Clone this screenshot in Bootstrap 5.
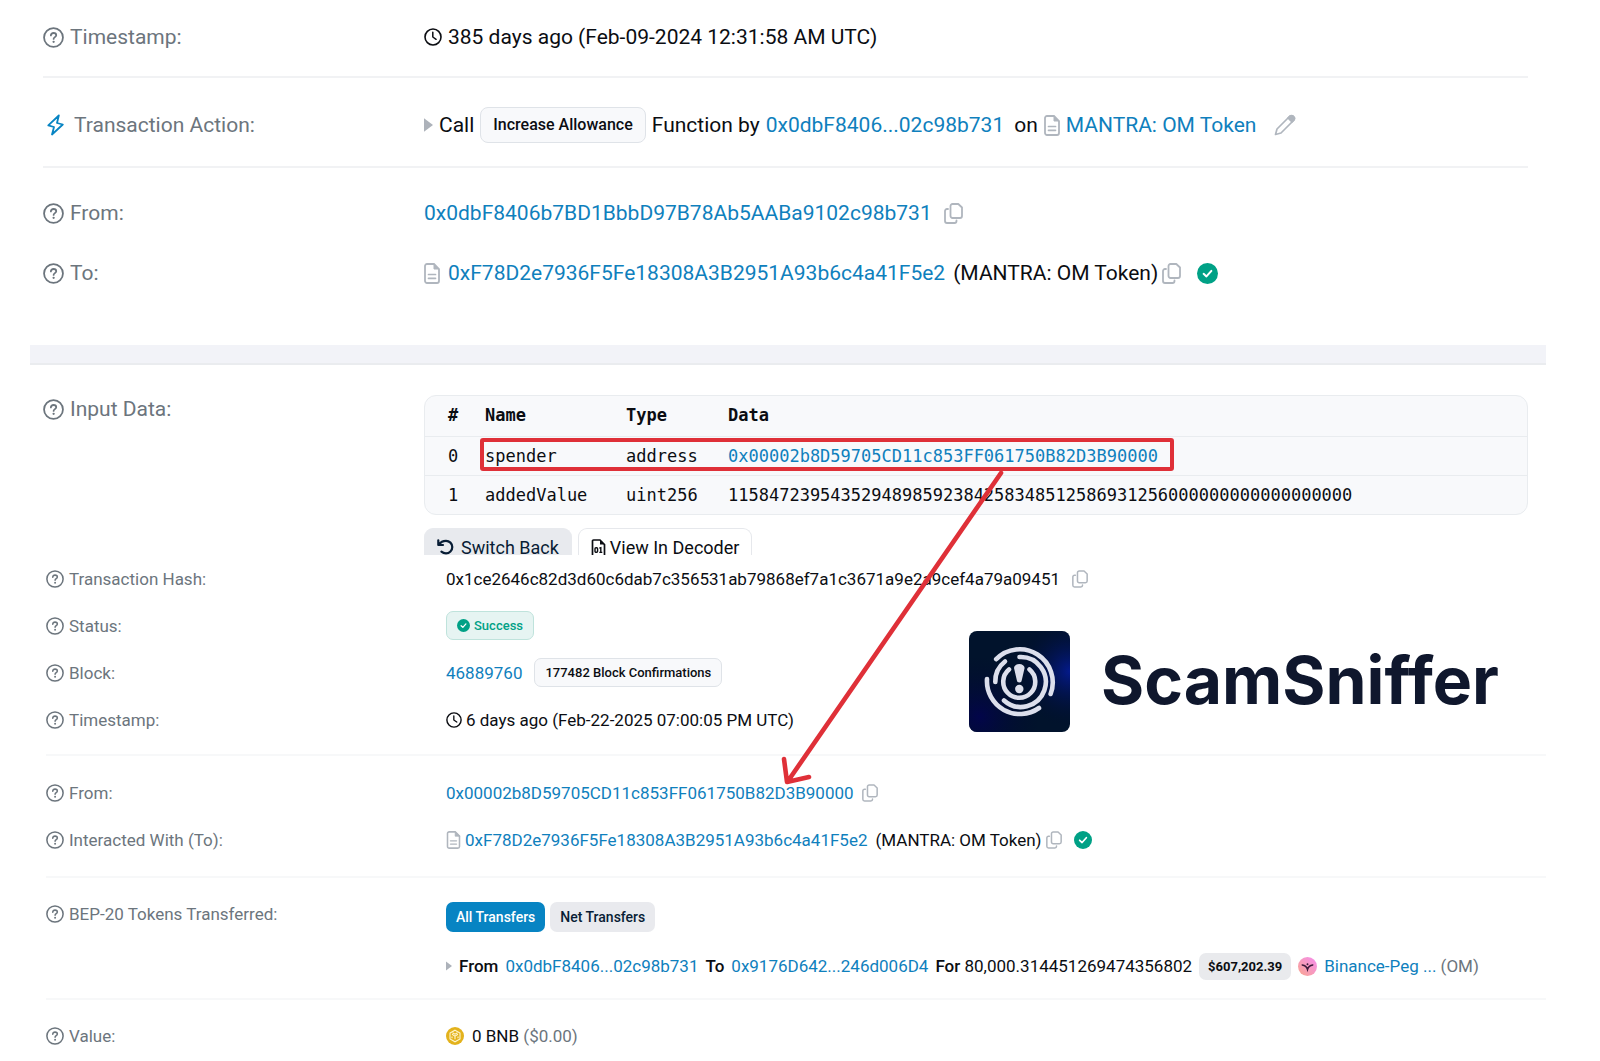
<!DOCTYPE html>
<html lang="en">
<head>
<meta charset="utf-8">
<meta name="viewport" content="width=device-width, initial-scale=1">
<title>Transaction Details</title>
<link href="https://cdn.jsdelivr.net/npm/bootstrap@5.3.0/dist/css/bootstrap.min.css" rel="stylesheet">
<style>
  body { font-family: Roboto, "Liberation Sans", sans-serif; color: #0b0d12; background: #fff; }
  a { color: #0f80bd; text-decoration: none; }
  svg { flex: none; display: block; }
  .ico { color: #b0b6be; background: none; border: 0; padding: 0; }
  .tx-page { position: relative; overflow: hidden; }
  .tx-label { flex: none; color: #6c757d; }
  .upper { font-size: 21px; line-height: 28px; margin: 0 72px 0 43px; }
  .upper .tx-label { width: 381px; gap: 6px; }
  .upper .tx-group { border-bottom: 2px solid #f1f2f4; }
  .lower { font-size: 17px; line-height: 24px; margin: 0 54px 0 46px; }
  .lower .tx-label { width: 400px; gap: 5px; }
  .lower .tx-group { border-bottom: 2px solid #f7f8f9; }
  .g-time { padding: 23px 0 25px; }
  .g-action { padding: 29px 0 23px; }
  .g-party { padding: 15px 0 42px; }
  .g-party .tx-row { min-height: 60px; }
  .lower .tx-row { min-height: 47px; }
  .g-status { padding-bottom: 11px; }
  .g-from { padding: 13px 0; }
  .g-tokens { padding: 24px 0 18px; }
  .g-value { padding-top: 12px; }
  .tx-band { height: 20px; margin: 0 54px 0 30px; background: #f2f3f8; border-bottom: 2px solid #eaecef; }
  .g-input { padding-top: 30px; }
  .gap-6 { gap: 6px; }
  .gap-7 { gap: 7px; }
  .pill { font-weight: 500; border: 1px solid #dfe3e8; border-radius: 8px; background: #f8f9fb; color: #0b0d12; }
  .pill-lg { font-size: 16px; line-height: 34px; padding: 0 12px; }
  .pill-sm { font-size: 13px; line-height: 27px; padding: 0 10px; border-radius: 7px; }
  .pill-ok { color: #00a186; background: #e6f4f2; border-color: #bfe3dc; gap: 4px; }
  .pill-usd { font-size: 13px; line-height: 27px; padding: 0 9px; font-weight: 700; background: #e9eaed; border-radius: 7px; }
  .data-box { border: 1px solid #e9ecef; border-radius: 12px; background: #f8f9fb; overflow: hidden; }
  .data-table { width: 100%; font-family: "DejaVu Sans Mono", "Liberation Mono", monospace; font-size: 17px; line-height: 24px; }
  .data-table th, .data-table td { padding: 7px 0; text-align: left; }
  .data-table th { padding-bottom: 9px; }
  .data-table th:first-child, .data-table td:first-child { padding-left: 23px; width: 60px; }
  .data-table tbody tr { border-top: 1px solid #e9ecef; }
  .c-name { width: 141px; } .c-type { width: 102px; }
  .btn-strip { margin-top: 13px; gap: 6px; }
  .btn-strip button { font-size: 18px; line-height: 28px; padding: 5px 12px 0; border: 1px solid #e6e8ec; border-bottom: 0; border-radius: 9px 9px 0 0; background: #fff; color: #0b0d12; height: 27px; }
  .btn-strip svg { margin-top: 5px; }
  .btn-strip .on { background: #e8eaee; border-color: #e8eaee; color: #081d35; }
  .tabs button { font-size: 14px; font-weight: 500; line-height: 30px; padding: 0 10px; border: 0; border-radius: 7px; background: #e9eaee; color: #081d35; }
  .tabs .on { background: #0784c3; color: #fff; }
  .tabs { gap: 5px; }
  .tx-line { margin-top: 20px; height: 28px; }
  .semi { font-weight: 500; }
  .brand-mark { position: absolute; left: 969px; top: 631px; gap: 31px; }
  .brand-name { font-family: Inter, Roboto, sans-serif; font-weight: 700; font-size: 66px; line-height: 98px; color: #0f172d; }
  .note { position: absolute; left: 0; top: 0; pointer-events: none; }
</style>
<script src="https://cdn.jsdelivr.net/npm/bootstrap@5.3.0/dist/js/bootstrap.bundle.min.js"></script>
</head>
<body>
<svg width="0" height="0" class="position-absolute" aria-hidden="true">
  <defs>
    <symbol id="help" viewBox="0 0 20 20"><circle cx="10" cy="10" r="9" fill="none" stroke="currentColor" stroke-width="1.7"/><path d="M7.5 8c0-1.500 1-2.300 2.500-2.300s2.600.8 2.600 2.200c0 1.700-2.500 1.800-2.500 3.500" fill="none" stroke="currentColor" stroke-width="1.700" stroke-linecap="round"/><circle cx="10.100" cy="14.100" r="1.100" fill="currentColor"/></symbol>
    <symbol id="clock" viewBox="0 0 18 18"><circle cx="9" cy="9" r="8" fill="none" stroke="currentColor" stroke-width="1.600"/><path d="M8.800 4.300V9l3.300 2.300" fill="none" stroke="currentColor" stroke-width="1.500" stroke-linecap="round" stroke-linejoin="round"/></symbol>
    <symbol id="doc" viewBox="0 0 16 21"><path d="M3 1h7l5 5v12a2 2 0 0 1-2 2H3a2 2 0 0 1-2-2V3a2 2 0 0 1 2-2z" fill="none" stroke="currentColor" stroke-width="1.800"/><path d="M10 1v5h5z" fill="currentColor" stroke="currentColor"/><path d="M4.500 11.500h7M4.500 15.300h7" stroke="currentColor" stroke-width="1.700" stroke-linecap="round"/></symbol>
    <symbol id="copy" viewBox="0 0 19 21"><path d="M8.500 1h5.800L18 4.500V13a2 2 0 0 1-2 2H8.500a2 2 0 0 1-2-2V3a2 2 0 0 1 2-2z" fill="none" stroke="currentColor" stroke-width="1.800" stroke-linejoin="round"/><path d="M4 6H3a2 2 0 0 0-2 2v10a2 2 0 0 0 2 2h7.500a2 2 0 0 0 2-2v-.5" fill="none" stroke="currentColor" stroke-width="1.800" stroke-linecap="round"/></symbol>
    <symbol id="ok" viewBox="0 0 20 20"><circle cx="10" cy="10" r="10" fill="#00a186"/><path d="M6.300 10.300l2.700 2.500 4.700-5.300" fill="none" stroke="#fff" stroke-width="1.900" stroke-linecap="round" stroke-linejoin="round"/></symbol>
    <symbol id="caret" viewBox="0 0 8 12"><path d="M0 0L8 6L0 12z" fill="#adb2ba"/></symbol>
  </defs>
</svg>

<main class="tx-page">
  <section class="upper">
    <div class="tx-group g-time d-flex">
      <div class="tx-label d-flex align-items-center"><svg width="21" height="21"><use href="#help"/></svg><span>Timestamp:</span></div>
      <div class="d-flex align-items-center gap-6"><svg width="18" height="18"><use href="#clock"/></svg><span>385 days ago (Feb-09-2024 12:31:58 AM UTC)</span></div>
    </div>
    <div class="tx-group g-action d-flex align-items-center">
      <div class="tx-label d-flex align-items-center">
        <svg class="ms-1 me-1" width="17" height="22" viewBox="0 0 17 22" fill="none" stroke="#0784c3" stroke-width="1.800" stroke-linejoin="round"><path d="M11.800 1.500L1.300 11.300 7 13 5 20.500 15.800 10.500 10 9z"/></svg><span>Transaction Action:</span>
      </div>
      <div class="d-flex align-items-center gap-6">
        <svg width="9" height="14"><use href="#caret"/></svg><span>Call</span>
        <span class="pill pill-lg">Increase Allowance</span>
        <span>Function by</span> <a href="#">0x0dbF8406...02c98b731</a> <span class="ms-1">on</span>
        <svg class="ico" width="16" height="21"><use href="#doc"/></svg><a href="#">MANTRA: OM Token</a>
        <button type="button" class="ico ms-2" aria-label="Edit name tag"><svg class="ms-1" width="22" height="22" viewBox="0 0 22 22" fill="none" stroke="currentColor" stroke-width="1.700" stroke-linejoin="round"><path d="M1.500 20.500L3 15 15.500 2.500a2.500 2.500 0 0 1 4 4L7 19z"/><path d="M14 4l2-2h3l1.500 2-.5 2-2 2z" fill="currentColor"/></svg></button>
      </div>
    </div>
    <div class="g-party">
      <div class="tx-row d-flex align-items-center">
        <div class="tx-label d-flex align-items-center"><svg width="21" height="21"><use href="#help"/></svg><span>From:</span></div>
        <a href="#">0x0dbF8406b7BD1BbbD97B78Ab5AABa9102c98b731</a>
        <button type="button" class="ico ms-2 ps-1" aria-label="Copy address"><svg width="19" height="21"><use href="#copy"/></svg></button>
      </div>
      <div class="tx-row d-flex align-items-center">
        <div class="tx-label d-flex align-items-center"><svg width="21" height="21"><use href="#help"/></svg><span>To:</span></div>
        <svg class="ico" width="16" height="21"><use href="#doc"/></svg>
        <a class="ms-2 me-2" href="#">0xF78D2e7936F5Fe18308A3B2951A93b6c4a41F5e2</a><span>(MANTRA: OM Token)</span>
        <button type="button" class="ico ms-1 me-3" aria-label="Copy address"><svg width="19" height="21"><use href="#copy"/></svg></button>
        <svg width="21" height="21"><use href="#ok"/></svg>
      </div>
    </div>
  </section>

  <div class="tx-band"></div>

  <section class="upper">
    <div class="g-input d-flex align-items-start">
      <div class="tx-label d-flex align-items-center"><svg width="21" height="21"><use href="#help"/></svg><span>Input Data:</span></div>
      <div class="flex-grow-1">
        <div class="data-box">
          <table class="data-table">
            <thead><tr><th>#</th><th class="c-name">Name</th><th class="c-type">Type</th><th>Data</th></tr></thead>
            <tbody>
              <tr><td>0</td><td>spender</td><td>address</td><td><a href="#">0x00002b8D59705CD11c853FF061750B82D3B90000</a></td></tr>
              <tr><td>1</td><td>addedValue</td><td>uint256</td><td>1158472395435294898592384258348512586931256000000000000000000</td></tr>
            </tbody>
          </table>
        </div>
        <div class="btn-strip d-flex align-items-start">
          <button type="button" class="on d-flex align-items-start gap-7"><svg width="17" height="16" viewBox="0 0 17 16" fill="none" stroke="currentColor" stroke-width="2.200" stroke-linecap="round" stroke-linejoin="round"><path d="M1.300 1.300v4.700h4.700M1.800 5.700C3.600 3 6.200 1.800 9 1.800a6.300 6.300 0 0 1 0 12.600c-1.800 0-3.300-.6-4.600-1.700"/></svg><span>Switch Back</span></button>
          <button type="button" class="d-flex align-items-start"><svg class="me-1" width="15" height="16" viewBox="0 0 15 16"><path d="M2.500 1H9l4.500 4.500V18h-12V2a1 1 0 0 1 1-1z" fill="none" stroke="currentColor" stroke-width="1.700"/><path d="M9 1v4.500h4.500z" fill="currentColor"/><rect x="4" y="8.700" width="2.600" height="4.600" rx="1" fill="none" stroke="currentColor" stroke-width="1.400"/><path d="M8.300 9.200l1.500-.5v4.800M8.300 13.400h3" fill="none" stroke="currentColor" stroke-width="1.400"/></svg><span>View In Decoder</span></button>
        </div>
      </div>
    </div>
  </section>

  <section class="lower">
    <div class="tx-group g-status">
      <div class="tx-row d-flex align-items-center">
        <div class="tx-label d-flex align-items-center"><svg width="18" height="18"><use href="#help"/></svg><span>Transaction Hash:</span></div>
        <span>0x1ce2646c82d3d60c6dab7c356531ab79868ef7a1c3671a9e2a9cef4a79a09451</span>
        <button type="button" class="ico ms-2 ps-1" aria-label="Copy hash"><svg width="16" height="18"><use href="#copy"/></svg></button>
      </div>
      <div class="tx-row d-flex align-items-center">
        <div class="tx-label d-flex align-items-center"><svg width="18" height="18"><use href="#help"/></svg><span>Status:</span></div>
        <span class="pill pill-sm pill-ok d-flex align-items-center"><svg width="13" height="13"><use href="#ok"/></svg>Success</span>
      </div>
      <div class="tx-row d-flex align-items-center">
        <div class="tx-label d-flex align-items-center"><svg width="18" height="18"><use href="#help"/></svg><span>Block:</span></div>
        <div class="d-flex align-items-center gap-2"><a class="pe-1" href="#">46889760</a><span class="pill pill-sm">177482 Block Confirmations</span></div>
      </div>
      <div class="tx-row d-flex align-items-center">
        <div class="tx-label d-flex align-items-center"><svg width="18" height="18"><use href="#help"/></svg><span>Timestamp:</span></div>
        <svg class="me-1" width="16" height="16"><use href="#clock"/></svg><span>6 days ago (Feb-22-2025 07:00:05 PM UTC)</span>
      </div>
    </div>
    <div class="tx-group g-from">
      <div class="tx-row d-flex align-items-center">
        <div class="tx-label d-flex align-items-center"><svg width="18" height="18"><use href="#help"/></svg><span>From:</span></div>
        <a href="#">0x00002b8D59705CD11c853FF061750B82D3B90000</a>
        <button type="button" class="ico ms-2" aria-label="Copy address"><svg width="16" height="18"><use href="#copy"/></svg></button>
      </div>
      <div class="tx-row d-flex align-items-center">
        <div class="tx-label d-flex align-items-center"><svg width="18" height="18"><use href="#help"/></svg><span>Interacted With (To):</span></div>
        <svg class="ico me-1" width="15" height="18"><use href="#doc"/></svg>
        <a class="me-2" href="#">0xF78D2e7936F5Fe18308A3B2951A93b6c4a41F5e2</a><span>(MANTRA: OM Token)</span>
        <button type="button" class="ico ms-1 me-2 pe-1" aria-label="Copy address"><svg width="16" height="18"><use href="#copy"/></svg></button>
        <svg width="18" height="18"><use href="#ok"/></svg>
      </div>
    </div>
    <div class="tx-group g-tokens d-flex align-items-start">
      <div class="tx-label d-flex align-items-center"><svg width="18" height="18"><use href="#help"/></svg><span>BEP-20 Tokens Transferred:</span></div>
      <div>
        <div class="tabs d-flex"><button type="button" class="on">All Transfers</button><button type="button">Net Transfers</button></div>
        <div class="tx-line d-flex align-items-center gap-7">
          <svg width="6" height="10"><use href="#caret"/></svg>
          <span class="semi">From</span><a href="#">0x0dbF8406...02c98b731</a>
          <span class="semi">To</span><a href="#">0x9176D642...246d006D4</a>
          <span><span class="semi">For</span> 80,000.314451269474356802</span>
          <span class="pill pill-usd border-0">$607,202.39</span>
          <svg width="19" height="19" viewBox="0 0 18 18"><defs><linearGradient id="om" x1="1" y1="0" x2="0" y2="1"><stop offset="0" stop-color="#f58cf0"/><stop offset="1" stop-color="#f9a78e"/></linearGradient></defs><circle cx="9" cy="9" r="9" fill="url(#om)"/><path d="M4 7.500c2.200.3 4.300 1.800 5 4.300.7-2.500 2.800-4 5-4.300" fill="none" stroke="#3a1a3a" stroke-width="1.400" stroke-linecap="round"/><circle cx="9" cy="6.800" r=".9" fill="#3a1a3a"/></svg>
          <span><a href="#">Binance-Peg ...</a> <span class="text-secondary">(OM)</span></span>
        </div>
      </div>
    </div>
    <div class="g-value">
      <div class="tx-row d-flex align-items-center">
        <div class="tx-label d-flex align-items-center"><svg width="18" height="18"><use href="#help"/></svg><span>Value:</span></div>
        <svg width="18" height="18" viewBox="0 0 18 18"><circle cx="9" cy="9" r="9" fill="#e3b21c"/><path d="M9 3.200l5 2.900v5.800l-5 2.900-5-2.900V6.100z" fill="none" stroke="#fff6d0" stroke-width="1.100"/><path d="M6 7.300l3 1.800 3-1.800M9 9.100v3.200M6.500 5.800L9 7.200l2.500-1.400M6 9.500v1.700M12 9.500v1.700" fill="none" stroke="#fff6d0" stroke-width="1.100"/></svg>
        <span class="ms-2">0 BNB <span class="text-secondary">($0.00)</span></span>
      </div>
    </div>
  </section>

  <div class="brand-mark d-flex align-items-start">
    <svg width="101" height="101" viewBox="0 0 101 101" role="img" aria-label="ScamSniffer logo">
      <defs><radialGradient id="lg1" cx="1" cy=".4" r=".55"><stop offset="0" stop-color="#041a8c"/><stop offset="1" stop-color="#010b2c" stop-opacity="0"/></radialGradient><radialGradient id="lg2" cx=".1" cy=".85" r=".6"><stop offset="0" stop-color="#02054a"/><stop offset="1" stop-color="#010b2c" stop-opacity="0"/></radialGradient></defs>
      <rect width="101" height="101" rx="8" fill="#01132c"/><rect width="101" height="101" rx="8" fill="url(#lg1)"/><rect width="101" height="101" rx="8" fill="url(#lg2)"/>
      <g fill="none" stroke="#dcdfec" stroke-width="4.600" stroke-linecap="round">
        <path d="M27.200 28.200A33 33 0 0 1 81.600 63"/>
        <path d="M18 48A33 33 0 0 0 70 77"/>
        <path d="M50.500 26A25 25 0 1 1 35 69.500"/>
        <path d="M26.300 51A25 25 0 0 1 36 30.500"/>
        <path d="M40 38.500A16 16 0 1 0 60.500 38.500"/>
      </g>
      <path d="M45 37a5.300 4 0 0 1 10.600 0L52.700 49.500a2.400 2 0 0 1-4.800 0z" fill="#dcdfec"/><circle cx="50.300" cy="58" r="4.200" fill="#dcdfec"/>
    </svg>
    <span class="brand-name">ScamSniffer</span>
  </div>

  <svg class="note" width="1200" height="800" viewBox="0 0 1200 800" fill="none" stroke="#df3038" stroke-linecap="round" stroke-linejoin="round" aria-hidden="true">
    <rect x="482" y="440" width="690" height="29" rx="1" stroke-width="4"/>
    <path d="M1001 473L788 781M784 759L787 782L809 777" stroke-width="4.600"/>
  </svg>
</main>
</body>
</html>
